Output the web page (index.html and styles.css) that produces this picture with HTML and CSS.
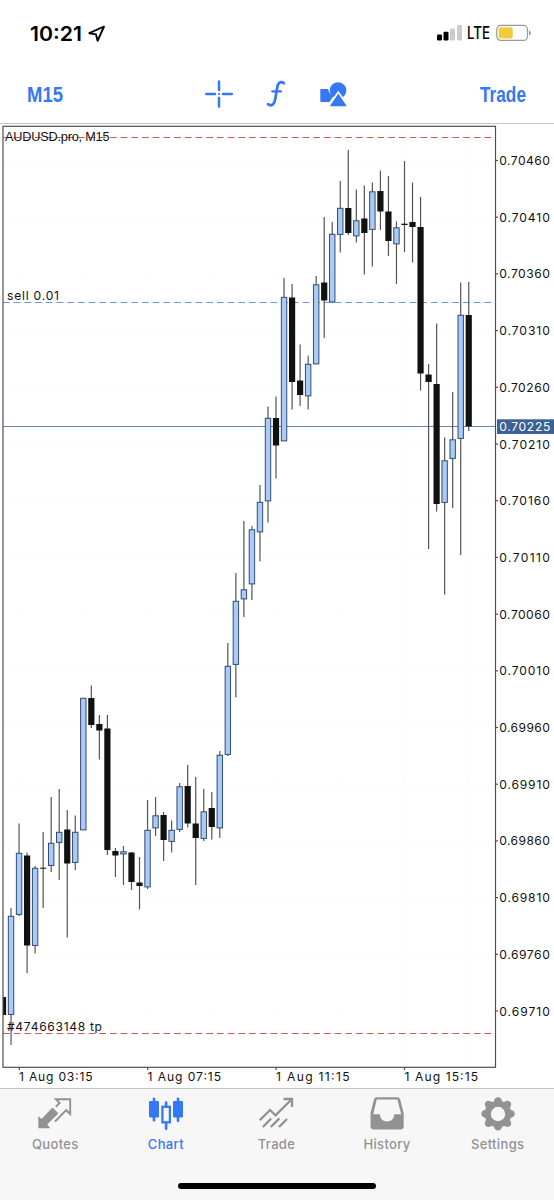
FILE: index.html
```html
<!DOCTYPE html>
<html lang="en">
<head>
<meta charset="utf-8">
<title>AUDUSD.pro, M15</title>
<link rel="stylesheet" href="styles.css">
</head>
<body>
<div class="app">
  <div class="status">
    <div class="clock">
      <svg width="53" height="28"><text class="time" x="0" y="20" textLength="52" lengthAdjust="spacingAndGlyphs">10:21</text></svg>
      <svg class="location" width="18" height="18" viewBox="0 0 18 18"><path d="M16 1.5 1.3 8.2 8 9.4 9.6 15.8Z" fill="none" stroke="#000" stroke-width="1.9" stroke-linejoin="round"/></svg>
    </div>
    <div class="signals">
      <svg width="26" height="18" viewBox="0 0 26 18"><g fill="#000"><rect x="0" y="10.5" width="5" height="6" rx="1.2"/><rect x="6.5" y="7.8" width="5" height="8.7" rx="1.2"/></g><g fill="#ccc"><rect x="13" y="4.5" width="5" height="12" rx="1.2"/><rect x="20" y="1" width="5" height="15.5" rx="1.2"/></g></svg>
      <svg class="carrier" width="25" height="24"><text class="lte" x="0" y="18" textLength="23" lengthAdjust="spacingAndGlyphs">LTE</text></svg>
      <svg width="36" height="18" viewBox="0 0 36 18"><rect x=".8" y="1.4" width="30.7" height="15" rx="4" fill="none" stroke="#999" stroke-width="1.2"/><rect x="2.7" y="3.3" width="14" height="11.3" rx="2" fill="#f2ca3c"/><path d="M33 6.5Q34.8 7.4 34.8 9T33 11.5Z" fill="#8d8d8d"/></svg>
    </div>
  </div>
  <div class="toolbar">
    <svg class="period" width="40" height="32"><text class="action" x="0" y="23.5" textLength="36" lengthAdjust="spacingAndGlyphs">M15</text></svg>
    <div class="tools">
      <svg width="28" height="28" viewBox="0 0 28 28"><path d="M14 1.6V10M14 18V26.4M1.2 14H10M18 14H26.8" stroke="#3478f6" stroke-width="2.5" stroke-linecap="round"/><circle cx="14" cy="14" r="1.1" fill="#3478f6"/></svg>
      <svg width="20" height="28" viewBox="0 0 20 28"><path d="M18 3.2C14.5.5 12 3 11.3 7L9.2 19.2C8.5 24.2 5.5 26.8 2 24.2" fill="none" stroke="#3478f6" stroke-width="2.7" stroke-linecap="round"/><path d="M6.3 11.4H15" stroke="#3478f6" stroke-width="2.3" stroke-linecap="round"/></svg>
      <svg width="28" height="28" viewBox="0 0 28 28"><g fill="#3478f6"><path d="M1 9H8.2A10 10 0 0 0 13.2 16.2L9.5 22H1Q.3 22 .3 21.2V9.8Q.3 9 1 9Z"/><path d="M11.2 15.2A8.3 8.3 0 1 1 25 15.1L22.8 17.3 18.3 10.8 13.8 17.1A8.3 8.3 0 0 1 11.2 15.2Z"/><path d="M18.3 13.5 26.8 26.2H9.8Z"/></g></svg>
    </div>
    <svg class="order" width="48" height="32"><text class="action" x="1" y="23.5" textLength="46" lengthAdjust="spacingAndGlyphs">Trade</text></svg>
  </div>
  <svg class="chart" id="chart" width="554" height="964" viewBox="0 124 554 964"></svg>
  <nav class="tabs">
    <div class="tab">
      <svg width="36" height="36" viewBox="0 0 36 36"><path fill="#929292" d="M1.3 32.2V20L4.5 23 14.7 12.3Q15.5 11.6 16.3 12.3L20.6 16.6Q21.3 17.4 20.6 18.2L10.2 28.5 13.5 32.2Z"/><path d="M18 25.5 29.2 14.2 33.2 18V3.2H18.8L22.6 7 18.8 10.7" fill="none" stroke="#929292" stroke-width="1.9"/></svg>
      <span>Quotes</span>
    </div>
    <div class="tab active">
      <svg width="36" height="36" viewBox="0 0 36 36"><g fill="#3478f6"><rect x="1" y="5" width="10" height="16.5" rx="1"/><rect x="4.7" y="1.5" width="2.6" height="24" rx="1.2"/><rect x="25" y="5" width="10" height="16.5" rx="1"/><rect x="28.7" y="1.5" width="2.6" height="24.5" rx="1.2"/></g><rect x="14.4" y="10.8" width="7.5" height="15.5" fill="none" stroke="#3478f6" stroke-width="2.3"/><path d="M18.1 6.5V10M18.1 27V32.8" stroke="#3478f6" stroke-width="2.6" stroke-linecap="round"/></svg>
      <span>Chart</span>
    </div>
    <div class="tab">
      <svg width="36" height="36" viewBox="0 0 36 36"><path d="M1.8 24.3 12 14 17.5 19.4 33.2 3.8M25.5 3H34V11M4.8 31 13.2 22.5M12.8 31 21.4 22.4M21 31 29 23" fill="none" stroke="#929292" stroke-width="2.3"/></svg>
      <span>Trade</span>
    </div>
    <div class="tab">
      <svg width="36" height="36" viewBox="0 0 36 36"><path fill="#929292" fill-rule="evenodd" d="M7.3 1.3H28.3Q30.5 1.3 31.2 3.6L34.7 17.3V30.3Q34.7 33.5 31.5 33.5H4.8Q1.5 33.5 1.5 30.3V17.3L4.9 3.6Q5.6 1.3 7.3 1.3ZM7.8 3.6 4.2 18.2H11V19.6Q12.1 25.5 18.1 25.5T25.2 19.6V18.2H32.1L28.5 3.6Z"/></svg>
      <span>History</span>
    </div>
    <div class="tab">
      <svg width="36" height="36" viewBox="0 0 36 36"><path fill="#929292" fill-rule="evenodd" d="M15 2.5Q18 .2 21 2.5L22.2 5.4Q23.5 6 24.4 5.7L27.2 4.7Q31 4.8 31.2 8.6L30.2 11.4Q30 12.6 30.5 13.6L33.5 15Q36 18 33.5 20.6L30.5 22.2Q30 23.3 30.2 24.3L31.3 27.3Q30.9 30.8 27.4 31.1L24.4 30.1Q23.4 29.8 22.3 30.4L21 33.2Q18 35.9 15 33.2L13.7 30.4Q12.6 29.8 11.6 30.1L8.6 31.1Q5 30.8 4.7 27.3L5.8 24.3Q6 23.3 5.5 22.2L2.5 20.6Q0 18 2.5 15L5.5 13.6Q6 12.6 5.8 11.4L4.8 8.6Q5 4.8 8.8 4.7L11.6 5.7Q12.5 6 13.8 5.4ZM18 10.8A7.2 7.2 0 1 0 18 25.2 7.2 7.2 0 1 0 18 10.8Z"/></svg>
      <span>Settings</span>
    </div>
  </nav>
  <div class="home"><div class="home-bar"></div></div>
</div>
<script src="chart.js"></script>
</body>
</html>
```
FILE: styles.css
```css
body {
  margin: 0;
  background: #fff;
  font-family: Inter, "Liberation Sans", sans-serif;
}
.app {
  width: 554px;
  height: 1200px;
  display: flex;
  flex-direction: column;
  overflow: hidden;
}
svg { display: block; flex: none; overflow: visible; }
.status {
  height: 66px;
  box-sizing: border-box;
  padding: 21px 22px 0 30px;
  display: flex;
  justify-content: space-between;
  align-items: flex-start;
}
.clock { display: flex; gap: 5px; }
.location { margin-top: 4px; }
.time { font-size: 20.5px; font-weight: 600; }
.signals { display: flex; align-items: center; }
.carrier { margin: 0 4px; }
.lte { font-size: 17px; font-weight: 500; }
.toolbar {
  height: 58px;
  box-sizing: border-box;
  padding: 0 27px 1px;
  display: flex;
  align-items: center;
  justify-content: space-between;
  border-bottom: 1px solid #c6c6c6;
}
.action {
  font-family: "Liberation Sans Narrow", "Liberation Sans", sans-serif;
  font-size: 21.5px;
  font-weight: 700;
  fill: #3478f6;
}
.tools { display: flex; gap: 33.5px; padding-left: 6px; }
.label { font-size: 12.1px; fill: #111; }
.title { font-family: "Liberation Sans", sans-serif; font-size: 12.7px; fill: #111; }
.current { fill: #fff; }
.wick { stroke: #555; stroke-width: 1.2; }
.up { fill: #a9cbf8; stroke: #344b70; stroke-width: 1; }
.down { fill: #111; }
.grid { stroke: #fcfcfc; }
.frame { fill: none; stroke: #505050; stroke-width: 1.2; }
.limit { stroke: #d25552; stroke-dasharray: 6.7 4; }
.sell { stroke: #6b96e2; stroke-dasharray: 6.7 4; }
.bid { stroke: #6b86ac; }
.bid-tag { fill: #3d6095; }
.tabs {
  height: 80px;
  box-sizing: border-box;
  background: #f7f7f7;
  border-top: 1px solid #c2c2c2;
  display: grid;
  grid-template-columns: repeat(5, 110.6px);
}
.tab {
  display: flex;
  flex-direction: column;
  align-items: center;
  padding-top: 7px;
  gap: 3px;
  color: #929292;
  font-size: 13px;
  font-weight: 500;
  line-height: 18px;
  letter-spacing: .35px;
}
.active { color: #3478f6; }
.home {
  flex: 1;
  background: #f7f7f7;
  display: flex;
  align-items: flex-start;
  justify-content: center;
  padding-top: 15px;
}
.home-bar { width: 198px; height: 6px; border-radius: 3px; background: #000; }
```
FILE: chart.js
```js
// Each candle: high, body top, body bottom, low, rising (1) or falling (0).
const candles = [
  [997,997,1015,1015,0],[908,916,1014.5,1045,1],[823.5,853,914.5,916,1],[852.5,855.5,945.5,973,0],
  [866,868,945.5,953.5,1],[832,867.7,868.7,908,0],[797,843,865.5,872,1],[789,832,842.5,880,1],
  [810,829.5,863.5,937.5,0],[815.5,832,862.5,870,1],[698,698,830,830,1],[685.5,698,725,728,0],
  [715,724,730.5,759.5,0],[715,728.5,850,855,0],[848,851,855.5,877,0],[846,851.5,854,885,1],
  [852,852.5,882,890,0],[857,882.5,886,909.5,0],[800,830,887,889,1],[797,815.5,828,836,1],
  [812,815,840,861,0],[820.5,830,841.5,852.5,1],[783,786.5,829.5,832,1],[765,786,823.5,827.5,0],
  [777,823.5,838,885,0],[789,811.5,838.5,841,1],[792,808,827,839.5,0],[751,755,828,838,1],
  [643,666,754.5,756,1],[573,601,664.5,697.5,1],[521,589.5,599,617,1],[526,529.5,584,600,1],
  [485,502,532,561.5,1],[406.5,418,501,522.5,1],[396.5,418,445.5,478.5,0],[278,297,441,441,1],
  [284,297.5,382,409.5,0],[344.5,380.5,395,406,0],[355.5,364,396,409.5,1],[276,284.5,364,364,1],
  [217,282.5,300.5,338,0],[222,234,302,303,1],[181,208,234.5,252.5,1],[150,208,233,235,0],
  [189.5,220.5,236,242.5,1],[185.5,218.5,233,274.5,0],[182.5,191.5,229.5,266.5,1],[170.5,191,211.5,230,0],
  [176,211.5,241,256,0],[221.5,227.5,244,284,1],[161,223.7,225,252,0],[182.5,222,227,262.5,0],
  [197,227,373.5,390.5,0],[364,374.5,382,549,0],[323.5,384,504,511.5,0],[437.5,460.5,502.5,594.5,1],
  [392,439.5,458.5,508,1],[282.5,315,438.5,555,1],[282,315,426.5,431,0]
];
const line = (x1, y1, x2, y2, cls) => `<line x1="${x1}" y1="${y1}" x2="${x2}" y2="${y2}" class="${cls}"/>`;
const text = (x, y, w, cls, s) => `<text x="${x}" y="${y}" textLength="${w}" class="${cls}">${s}</text>`;
let out = '<defs><clipPath id="plot"><rect x="3" y="126" width="493" height="942"/></clipPath></defs>';

for (let i = 0; i < 8; i++) out += line(19.5 + i * 64.3, 127, 19.5 + i * 64.3, 1067, 'grid');
for (let i = 0; i < 16; i++) out += line(4, 160.5 + i * 56.7, 495, 160.5 + i * 56.7, 'grid');
out += line(3, 137.5, 491, 137.5, 'limit');
out += line(3, 1033.5, 491, 1033.5, 'limit');
out += line(3, 302.5, 491, 302.5, 'sell');
out += line(3, 426.5, 496, 426.5, 'bid');

out += '<g clip-path="url(#plot)">';
candles.forEach(([high, top, bottom, low, rising], i) => {
  const x = 3 + i * 8.03;
  out += line(x, high, x, low, 'wick');
  out += rising
    ? `<rect x="${x - 2.7}" y="${top + .3}" width="5.4" height="${bottom - top - .4}" class="up"/>`
    : `<rect x="${x - 3.1}" y="${top}" width="6.2" height="${bottom - top}" class="down"/>`;
});
out += '</g><rect x="3" y="126.3" width="492.5" height="941" class="frame"/>';

for (let i = 0; i < 16; i++) {
  const y = 160.5 + i * 56.7;
  out += line(495, y, 498, y, 'frame');
  out += text(499.3, y + 4.5, 50.5, 'label', (0.7046 - i * 0.0005).toFixed(5));
}
out += '<rect x="497" y="419.3" width="57" height="14.7" class="bid-tag"/>';
out += text(499.3, 431.2, 51, 'label current', '0.70225');
out += text(5, 141, 104.5, 'title', 'AUDUSD.pro, M15');
out += text(7, 299.5, 52, 'label', 'sell 0.01');
out += text(7, 1031, 95, 'label', '#474663148 tp');
['03:15', '07:15', '11:15', '15:15'].forEach((t, i) => {
  out += line(19.3 + i * 128.4, 1067, 19.3 + i * 128.4, 1070, 'frame');
  out += text(19 + i * 128.5, 1081, 73.5, 'label', '1 Aug ' + t);
});
document.getElementById('chart').innerHTML = out;
```
